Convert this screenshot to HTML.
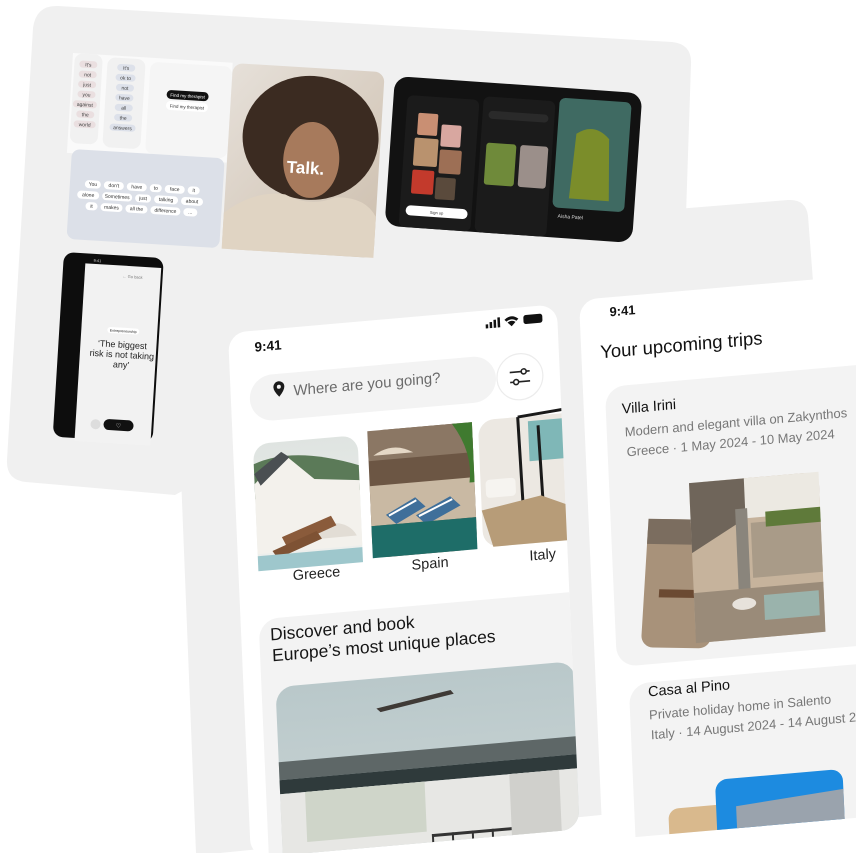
<!DOCTYPE html>
<html><head><meta charset="utf-8"><style>
html,body{margin:0;padding:0;background:#fff;width:856px;height:853px;overflow:hidden}
svg{display:block}
text{font-family:"Liberation Sans",sans-serif}
</style></head><body>
<svg width="856" height="853" viewBox="0 0 856 853" xmlns="http://www.w3.org/2000/svg">
<defs>
<linearGradient id="photo" x1="0" y1="0" x2="1" y2="1"><stop offset="0" stop-color="#e6e0d9"/><stop offset="1" stop-color="#cdbfae"/></linearGradient>
<linearGradient id="sky" x1="0" y1="0" x2="0" y2="1"><stop offset="0" stop-color="#dfe4e1"/><stop offset="1" stop-color="#eef0ee"/></linearGradient>
<linearGradient id="ceil" x1="0" y1="0" x2="0" y2="1"><stop offset="0" stop-color="#b9c8ca"/><stop offset="1" stop-color="#cfd8d8"/></linearGradient>
<clipPath id="lp"><rect x="0" y="0" width="330" height="525" rx="18"/></clipPath>
<clipPath id="rp"><rect x="0" y="0" width="300" height="540" rx="18"/></clipPath>
</defs>

<path d="M58,6 L672,42 Q692,44 691,64 L686,215 L175,495 L26,482 Q6,480 7,460 L33,28 Q36,5 58,6 Z" fill="#f0f0f0"/>
<path d="M172,250 L788,200 Q806,199 808,216 L852,790 L220,853 L196,853 Z" fill="#f0f0f0"/>

<g transform="translate(73,53) rotate(3.5)">
 <rect x="0" y="0" width="160" height="100" fill="#fafafa"/>
 <rect x="2" y="0" width="28" height="90" rx="8" fill="#f1f1f1"/>
 <rect x="35" y="2" width="38" height="90" rx="8" fill="#f1f1f1"/>
 <rect x="78" y="4" width="82" height="92" rx="8" fill="#f5f5f5"/>
 <g font-size="5" text-anchor="middle" fill="#444">
  <rect x="7" y="7" width="18" height="7" rx="3.5" fill="#eadfe0"/><text x="16" y="12.5">It's</text>
  <rect x="7" y="17" width="18" height="7" rx="3.5" fill="#eadfe0"/><text x="16" y="22.5">not</text>
  <rect x="7" y="27" width="18" height="7" rx="3.5" fill="#eadfe0"/><text x="16" y="32.5">just</text>
  <rect x="7" y="37" width="18" height="7" rx="3.5" fill="#eadfe0"/><text x="16" y="42.5">you</text>
  <rect x="3" y="47" width="24" height="7" rx="3.5" fill="#eadfe0"/><text x="15" y="52.5">against</text>
  <rect x="7" y="57" width="18" height="7" rx="3.5" fill="#eadfe0"/><text x="16" y="62.5">the</text>
  <rect x="5" y="67" width="22" height="7" rx="3.5" fill="#eadfe0"/><text x="16" y="72.5">world</text>
  <rect x="45" y="8" width="18" height="7" rx="3.5" fill="#dde1ea"/><text x="54" y="13.5">It's</text>
  <rect x="44" y="18" width="20" height="7" rx="3.5" fill="#dde1ea"/><text x="54" y="23.5">ok to</text>
  <rect x="45" y="28" width="18" height="7" rx="3.5" fill="#dde1ea"/><text x="54" y="33.5">not</text>
  <rect x="45" y="38" width="18" height="7" rx="3.5" fill="#dde1ea"/><text x="54" y="43.5">have</text>
  <rect x="45" y="48" width="18" height="7" rx="3.5" fill="#dde1ea"/><text x="54" y="53.5">all</text>
  <rect x="45" y="58" width="18" height="7" rx="3.5" fill="#dde1ea"/><text x="54" y="63.5">the</text>
  <rect x="41" y="68" width="26" height="7" rx="3.5" fill="#dde1ea"/><text x="54" y="73.5">answers</text>
 </g>
 <rect x="96" y="31" width="42" height="9" rx="4.5" fill="#111"/>
 <text x="117" y="37.5" font-size="4.5" fill="#fff" text-anchor="middle">Find my therapist</text>
 <rect x="96" y="42" width="42" height="9" rx="4.5" fill="#fff"/>
 <text x="117" y="48.5" font-size="4.5" fill="#333" text-anchor="middle">Find my therapist</text>
</g>
<g transform="translate(72,149) rotate(3.5)">
 <rect x="0" y="0" width="153" height="90" rx="8" fill="#dce0e8"/>
 <g font-size="5" text-anchor="middle" fill="#333">
  <rect x="15" y="30" width="16" height="8" rx="4" fill="#fff"/><text x="23" y="35.5">You</text>
  <rect x="34" y="30" width="20" height="8" rx="4" fill="#fff"/><text x="44" y="35.5">don't</text>
  <rect x="57" y="30" width="20" height="8" rx="4" fill="#fff"/><text x="67" y="35.5">have</text>
  <rect x="80" y="30" width="12" height="8" rx="4" fill="#fff"/><text x="86" y="35.5">to</text>
  <rect x="95" y="30" width="20" height="8" rx="4" fill="#fff"/><text x="105" y="35.5">face</text>
  <rect x="118" y="30" width="12" height="8" rx="4" fill="#fff"/><text x="124" y="35.5">it</text>
  <rect x="8" y="41" width="22" height="8" rx="4" fill="#fff"/><text x="19" y="46.5">alone</text>
  <rect x="33" y="41" width="30" height="8" rx="4" fill="#fff"/><text x="48" y="46.5">Sometimes</text>
  <rect x="66" y="41" width="16" height="8" rx="4" fill="#fff"/><text x="74" y="46.5">just</text>
  <rect x="85" y="41" width="24" height="8" rx="4" fill="#fff"/><text x="97" y="46.5">talking</text>
  <rect x="112" y="41" width="22" height="8" rx="4" fill="#fff"/><text x="123" y="46.5">about</text>
  <rect x="17" y="52" width="12" height="8" rx="4" fill="#fff"/><text x="23" y="57.5">it</text>
  <rect x="32" y="52" width="22" height="8" rx="4" fill="#fff"/><text x="43" y="57.5">makes</text>
  <rect x="57" y="52" width="22" height="8" rx="4" fill="#fff"/><text x="68" y="57.5">all the</text>
  <rect x="82" y="52" width="30" height="8" rx="4" fill="#fff"/><text x="97" y="57.5">difference</text>
  <rect x="115" y="52" width="14" height="8" rx="4" fill="#fff"/><text x="122" y="57.5">...</text>
 </g>
</g>
<g transform="translate(233,63) rotate(3.5)">
 <rect x="0" y="0" width="152" height="186" rx="10" fill="url(#photo)"/>
 <ellipse cx="82" cy="70" rx="68" ry="62" fill="#3b2b21"/>
 <ellipse cx="84" cy="92" rx="28" ry="38" fill="#a77a5c"/>
 <path d="M0,186 L0,150 Q30,125 60,128 Q85,140 110,128 Q140,125 152,145 L152,186 Z" fill="#e0d4c3"/>
 <text x="60" y="106" font-family="Liberation Serif,serif" font-size="17" font-weight="bold" fill="#fff">Talk.</text>
</g>
<g transform="translate(395,76) rotate(4)">
 <rect x="0" y="0" width="248" height="150" rx="14" fill="#121212"/>
 <rect x="14" y="18" width="72" height="132" rx="6" fill="#1b1b1b"/>
 <rect x="26" y="35" width="20" height="22" rx="2" fill="#c98f73"/>
 <rect x="50" y="45" width="20" height="22" rx="2" fill="#d8a7a0"/>
 <rect x="24" y="60" width="24" height="28" rx="2" fill="#b9926e"/>
 <rect x="50" y="70" width="22" height="24" rx="2" fill="#9d6f55"/>
 <rect x="24" y="92" width="22" height="24" rx="2" fill="#c33a2c"/>
 <rect x="48" y="98" width="20" height="22" rx="2" fill="#5a4a3c"/>
 <rect x="20" y="128" width="62" height="10" rx="5" fill="#fff"/>
 <text x="51" y="135" font-size="4" text-anchor="middle" fill="#333">Sign up</text>
 <rect x="90" y="14" width="72" height="136" rx="6" fill="#1b1b1b"/>
 <rect x="96" y="28" width="60" height="8" rx="4" fill="#2a2a2a"/>
 <rect x="96" y="60" width="30" height="42" rx="3" fill="#6f8a3a"/>
 <rect x="130" y="60" width="28" height="42" rx="3" fill="#9b8f8a"/>
 <rect x="166" y="10" width="72" height="110" rx="6" fill="#3f6a62"/>
 <path d="M185,45 Q202,32 218,48 L222,110 L182,110 Z" fill="#7b8d2a"/>
 <text x="172" y="130" font-size="5" fill="#ddd">Aisha Patel</text>
</g>
<g transform="translate(64,252) rotate(3.5)">
 <rect x="0" y="0" width="100" height="185" rx="10" fill="#0d0d0d"/>
 <rect x="22" y="10" width="76" height="178" fill="#f2f2f2"/>
 <text x="30" y="8" font-size="4" fill="#ccc">9:41</text>
 <text x="70" y="22" font-size="4" fill="#777" text-anchor="middle">← Go back</text>
 <rect x="48" y="72" width="32" height="6" rx="3" fill="#fff"/>
 <text x="64" y="76.5" font-size="3.5" fill="#222" text-anchor="middle">Entrepreneurship</text>
 <g font-family="Liberation Serif,serif" font-size="9" fill="#222" text-anchor="middle">
  <text x="64" y="92">‘The biggest</text><text x="64" y="102">risk is not taking</text><text x="64" y="112">any’</text>
 </g>
 <circle cx="42" cy="170" r="5" fill="#ddd"/>
 <rect x="50" y="164" width="30" height="11" rx="5.5" fill="#111"/>
 <text x="65" y="172" font-size="6" fill="#fff" text-anchor="middle">♡</text>
</g>

<!-- LEFT PHONE -->
<g transform="translate(228,333) rotate(-5) skewX(-2.5)">
 <rect x="0" y="0" width="330" height="525" rx="18" fill="#fff"/>
 <g clip-path="url(#lp)">
 <text x="26" y="21" font-size="13.5" font-weight="bold" fill="#111">9:41</text>
 <g fill="#111">
  <rect x="258" y="14" width="2.5" height="4"/><rect x="262" y="12" width="2.5" height="6"/><rect x="266" y="10" width="2.5" height="8"/><rect x="270" y="8" width="2.5" height="10"/>
  <path d="M277,11 Q284,5 291,11 L289,13 Q284,9 279,13 Z M280,14 Q284,11 288,14 L284,18 Z"/>
  <rect x="296" y="8" width="19" height="9" rx="2.5"/>
 </g>
 <rect x="19" y="45" width="247" height="46" rx="23" fill="#f3f3f3"/>
 <path d="M43,58 a5.5,5.5 0 0 1 11,0 q0,4 -5.5,10 q-5.5,-6 -5.5,-10 z" fill="#1b1b1b"/><circle cx="48.5" cy="58" r="2" fill="#f3f3f3"/>
 <text x="63" y="68" font-size="15" fill="#6b6b6b">Where are you going?</text>
 <circle cx="290" cy="69" r="23" fill="#fff" stroke="#ececec" stroke-width="1.2"/>
 <g stroke="#222" stroke-width="1.6" fill="none"><path d="M280,64 H300 M280,74 H300"/><circle cx="294" cy="64" r="2.5" fill="#fff"/><circle cx="286" cy="74" r="2.5" fill="#fff"/></g>
 <g transform="translate(20,113)">
  <rect width="105" height="127" rx="16" fill="url(#sky)"/>
  <path d="M0,20 Q40,5 105,30 L105,55 L0,55 Z" fill="#5b7a58"/>
  <path d="M0,40 L30,12 L60,40 L105,45 L105,110 L0,110 Z" fill="#f3f1ec"/>
  <path d="M0,30 L28,10 L36,16 L6,42 Z" fill="#4a4f52"/>
  <path d="M55,100 A25,25 0 0 1 100,100" fill="#e2ddd5"/>
  <path d="M25,95 L75,78 L80,88 L30,106 Z" fill="#8a5b3b"/>
  <path d="M15,108 L60,92 L65,100 L20,116 Z" fill="#7e5234"/>
  <rect x="0" y="112" width="105" height="15" fill="#9ec7cc"/>
 </g>
 <g transform="translate(135,110)">
  <rect width="105" height="127" rx="16" fill="#6c5644"/>
  <rect x="0" y="0" width="105" height="30" fill="#8b7764"/>
  <path d="M5,25 Q25,12 45,25 Z" fill="#e5d8c6"/>
  <rect x="0" y="55" width="105" height="40" fill="#c9b9a3"/>
  <path d="M15,85 L45,70 L55,80 L25,95 Z M45,88 L80,72 L90,82 L55,98 Z" fill="#3f6f9a"/>
  <path d="M18,86 L46,73 M48,89 L82,75" stroke="#fff" stroke-width="2"/>
  <rect x="0" y="95" width="105" height="32" fill="#1e6d68"/>
  <path d="M85,0 Q105,30 100,60 L105,60 L105,0 Z" fill="#3f7a2f"/>
 </g>
 <g transform="translate(246,109)">
  <rect width="105" height="127" rx="16" fill="#ece8e2"/>
  <rect x="50" y="5" width="50" height="40" fill="#7fb7b7"/>
  <path d="M40,0 L42,110 M60,10 L62,100 M40,0 L100,-5" stroke="#1a1a1a" stroke-width="3"/>
  <path d="M0,90 L60,80 L105,100 L105,127 L10,127 Z" fill="#b79c78"/>
  <rect x="5" y="60" width="30" height="18" rx="4" fill="#f6f4f0"/>
 </g>
 <g font-size="14.5" fill="#222" text-anchor="middle">
  <text x="78" y="252">Greece</text><text x="192" y="252">Spain</text><text x="305" y="253">Italy</text>
 </g>
 <rect x="18" y="288" width="340" height="300" rx="20" fill="#f3f3f3"/>
 <text x="29" y="310" font-size="17.5" fill="#151515">Discover and book</text>
 <text x="30" y="331" font-size="17.5" fill="#151515">Europe’s most unique places</text>
 <g transform="translate(32,357)">
  <rect width="300" height="220" rx="18" fill="url(#ceil)"/>
  <path d="M100,30 L175,18 L178,22 L104,34 Z" fill="#3f3a36"/>
  <rect x="0" y="75" width="300" height="18" fill="#5e6767"/>
  <rect x="0" y="93" width="300" height="14" fill="#2f3a3b"/>
  <rect x="0" y="107" width="300" height="120" fill="#e7e7e4"/>
  <rect x="25" y="107" width="120" height="50" fill="#cfd5c9"/>
  <rect x="230" y="107" width="50" height="120" fill="#d0d0cc"/>
  <g fill="#333"><rect x="150" y="160" width="80" height="3"/><rect x="150" y="175" width="80" height="2"/><rect x="150" y="160" width="2" height="60"/><rect x="170" y="160" width="2" height="60"/><rect x="190" y="160" width="2" height="60"/><rect x="210" y="160" width="2" height="60"/></g>
 </g>
 </g>
</g>

<!-- RIGHT PHONE -->
<g transform="translate(579,300) rotate(-5) skewX(-2.5)">
 <rect x="0" y="0" width="300" height="540" rx="18" fill="#fff"/>
 <g clip-path="url(#rp)">
 <text x="30" y="19" font-size="13" font-weight="bold" fill="#111">9:41</text>
 <text x="19" y="60" font-size="18.5" fill="#111">Your upcoming trips</text>
 <rect x="22" y="89" width="300" height="280" rx="20" fill="#f3f3f3"/>
 <text x="38" y="117" font-size="14.5" fill="#111">Villa Irini</text>
 <text x="40" y="140" font-size="13" fill="#777">Modern and elegant villa on Zakynthos</text>
 <text x="41" y="160" font-size="13" fill="#777">Greece · 1 May 2024 - 10 May 2024</text>
 <g transform="translate(60,224) rotate(6)"><rect width="70" height="128" rx="12" fill="#a8927a"/><rect x="0" y="0" width="70" height="25" fill="#7b6d5f"/><rect x="15" y="70" width="40" height="8" fill="#6b4a32"/></g>
 <g transform="translate(102,192)">
  <rect width="130" height="160" rx="14" fill="#c6b39c"/>
  <rect x="0" y="0" width="130" height="40" fill="#ece9e2"/>
  <path d="M0,0 L55,0 L55,40 L0,70 Z" fill="#6f655a"/>
  <rect x="45" y="30" width="12" height="100" fill="#8a857c"/>
  <rect x="60" y="45" width="70" height="55" fill="#a99b88"/>
  <rect x="75" y="35" width="55" height="15" fill="#5f7a3a"/>
  <rect x="0" y="110" width="130" height="50" fill="#9a8b79"/>
  <rect x="70" y="118" width="55" height="25" fill="#9ab3ac"/>
  <ellipse cx="50" cy="125" rx="12" ry="6" fill="#e7e2db"/>
 </g>
 <rect x="33" y="387" width="300" height="200" rx="20" fill="#f3f3f3"/>
 <text x="52" y="401" font-size="14.5" fill="#111">Casa al Pino</text>
 <text x="52" y="424" font-size="13" fill="#777">Private holiday home in Salento</text>
 <text x="53" y="444" font-size="13" fill="#777">Italy · 14 August 2024 - 14 August 2024</text>
 <rect x="67" y="515" width="60" height="40" rx="10" fill="#d9b98d"/>
 <g transform="translate(115,490)"><rect width="128" height="80" rx="12" fill="#1d8be0"/><path d="M20,28 L128,20 L128,80 L20,80 Z" fill="#9aa3ad"/></g>
 </g>
</g>
</svg>
</body></html>
